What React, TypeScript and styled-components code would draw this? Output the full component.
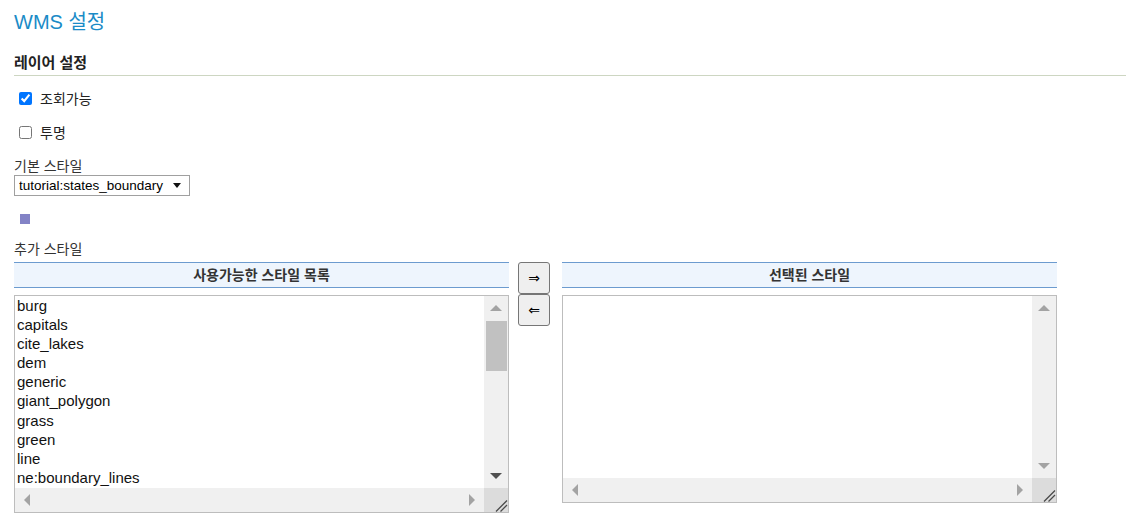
import styled, { createGlobalStyle } from 'styled-components';

const GlobalStyle = createGlobalStyle`
  html, body {
    margin: 0;
    padding: 0;
    background: #ffffff;
  }
  body {
    font-family: "Liberation Sans", "Noto Sans CJK KR", sans-serif;
    font-size: 14px;
    color: #222222;
  }
`;

const Page = styled.div`
  padding: 10px 14px 0 14px;
`;

const Title = styled.h1`
  margin: 0;
  font-size: 20px;
  line-height: 24px;
  font-weight: normal;
  color: #1a8bc7;
`;

const SectionTitle = styled.h3`
  margin: 19px -14px 0 0;
  padding-bottom: 2px;
  font-size: 15px;
  line-height: 20px;
  font-weight: bold;
  color: #222222;
  border-bottom: 1px solid #cdd6c2;
`;

const CheckRow = styled.label<{ $top: number }>`
  display: flex;
  align-items: center;
  height: 20px;
  margin-top: ${p => p.$top}px;
  padding-left: 5px;
  gap: 8px;
  font-size: 14px;
  color: #222222;

  input {
    margin: 0;
    width: 13px;
    height: 13px;
  }
`;

const FieldLabel = styled.div<{ $top: number }>`
  margin-top: ${p => p.$top}px;
  font-size: 14px;
  line-height: 18px;
  color: #333333;
`;

const SelectWrap = styled.div`
  position: relative;
  width: 176px;

  &::after {
    content: "";
    position: absolute;
    right: 9px;
    top: 8px;
    border-left: 4px solid transparent;
    border-right: 4px solid transparent;
    border-top: 5px solid #111111;
    pointer-events: none;
  }
`;

const StyleSelect = styled.select`
  display: block;
  appearance: none;
  width: 176px;
  height: 21px;
  font-family: "Liberation Sans", sans-serif;
  font-size: 13.5px;
  color: #000000;
  border: 1px solid #a0a0a0;
  border-radius: 0;
  background: #ffffff;
  padding: 0 0 0 4px;
`;

const Swatch = styled.div<{ $color: string }>`
  width: 10px;
  height: 10px;
  margin: 18px 0 0 6px;
  background: ${p => p.$color};
`;

const Lists = styled.div`
  display: flex;
  align-items: flex-start;
  margin-top: 4px;
`;

const Column = styled.div`
  display: flex;
  flex-direction: column;
  width: 495px;
  flex: none;
`;

const ColumnHeader = styled.div`
  height: 24px;
  line-height: 24px;
  text-align: center;
  font-weight: bold;
  font-size: 14px;
  color: #333333;
  background: #eef5fd;
  border-top: 1px solid #6c9bcf;
  border-bottom: 1px solid #6c9bcf;
`;

const ListFrame = styled.div<{ $height: number }>`
  display: grid;
  grid-template-columns: 1fr 24px;
  grid-template-rows: 1fr 24px;
  margin-top: 7px;
  height: ${p => p.$height}px;
  border: 1px solid #bdbdbd;
  background: #ffffff;
  box-sizing: border-box;
`;

const ListContent = styled.div`
  overflow: hidden;
  min-width: 0;
  min-height: 0;
`;

const ListItem = styled.div`
  padding-left: 2px;
  font-size: 15px;
  line-height: 19.1px;
  color: #111111;
  white-space: nowrap;
`;

const VBar = styled.div`
  display: flex;
  flex-direction: column;
  background: #f0f0f0;
  min-height: 0;
`;

const HBar = styled.div`
  display: flex;
  background: #f0f0f0;
  min-width: 0;
`;

const BarTrack = styled.div`
  flex: 1;
  min-height: 0;
  min-width: 0;
`;

const Thumb = styled.div<{ $size: number }>`
  height: ${p => p.$size}px;
  margin: 1px 1px 0 2px;
  background: #c1c1c1;
`;

const ArrowCell = styled.div`
  flex: none;
  width: 24px;
  height: 24px;
  display: flex;
  align-items: center;
  justify-content: center;
`;

type Dir = 'up' | 'down' | 'left' | 'right';

const Arrow = styled.span<{ $dir: Dir; $active?: boolean }>`
  width: 0;
  height: 0;
  ${p => {
    const c = p.$active ? '#505050' : '#a3a3a3';
    switch (p.$dir) {
      case 'up':
        return `border-left: 6px solid transparent; border-right: 6px solid transparent; border-bottom: 6px solid ${c};`;
      case 'down':
        return `border-left: 6px solid transparent; border-right: 6px solid transparent; border-top: 6px solid ${c};`;
      case 'left':
        return `border-top: 6px solid transparent; border-bottom: 6px solid transparent; border-right: 6px solid ${c};`;
      default:
        return `border-top: 6px solid transparent; border-bottom: 6px solid transparent; border-left: 6px solid ${c};`;
    }
  }}
`;

const Corner = styled.div`
  background: #dcdcdc;
  display: flex;
`;

const Shuttle = styled.div`
  display: flex;
  flex-direction: column;
  margin: 0 12px 0 9px;
`;

const ShuttleButton = styled.button`
  width: 32px;
  height: 32px;
  padding: 0;
  font-size: 14px;
  font-family: "DejaVu Sans", sans-serif;
  color: #000000;
  background: #efefef;
  border: 1px solid #767676;
  border-radius: 3px;
`;

function ResizeGrip() {
  return (
    <svg width="24" height="24" viewBox="0 0 24 24">
      <path d="M12 23.5 L23 12.5 M16.5 23.5 L23 17" stroke="#4a4a4a" strokeWidth="1.3" fill="none" />
    </svg>
  );
}

function StyleList({ items, height, thumb }: { items: string[]; height: number; thumb?: number }) {
  return (
    <ListFrame $height={height}>
      <ListContent>
        {items.map(name => (
          <ListItem key={name}>{name}</ListItem>
        ))}
      </ListContent>
      <VBar>
        <ArrowCell><Arrow $dir="up" /></ArrowCell>
        <BarTrack>{thumb ? <Thumb $size={thumb} /> : null}</BarTrack>
        <ArrowCell><Arrow $dir="down" $active={!!thumb} /></ArrowCell>
      </VBar>
      <HBar>
        <ArrowCell><Arrow $dir="left" /></ArrowCell>
        <BarTrack />
        <ArrowCell><Arrow $dir="right" /></ArrowCell>
      </HBar>
      <Corner>
        <ResizeGrip />
      </Corner>
    </ListFrame>
  );
}

const available = [
  'burg', 'capitals', 'cite_lakes', 'dem', 'generic', 'giant_polygon', 'grass',
  'green', 'line', 'ne:boundary_lines',
];

export default function App() {
  return (
    <>
      <GlobalStyle />
      <Page>
        <Title>WMS 설정</Title>
        <SectionTitle>레이어 설정</SectionTitle>
        <CheckRow $top={12}>
          <input type="checkbox" defaultChecked />
          <span>조회가능</span>
        </CheckRow>
        <CheckRow $top={14}>
          <input type="checkbox" />
          <span>투명</span>
        </CheckRow>
        <FieldLabel $top={15}>기본 스타일</FieldLabel>
        <SelectWrap>
          <StyleSelect defaultValue="tutorial:states_boundary">
            <option>tutorial:states_boundary</option>
          </StyleSelect>
        </SelectWrap>
        <Swatch $color="#8383c6" />
        <FieldLabel $top={16}>추가 스타일</FieldLabel>
        <Lists>
          <Column>
            <ColumnHeader>사용가능한 스타일 목록</ColumnHeader>
            <StyleList items={available} height={218} thumb={50} />
          </Column>
          <Shuttle>
            <ShuttleButton>⇒</ShuttleButton>
            <ShuttleButton>⇐</ShuttleButton>
          </Shuttle>
          <Column>
            <ColumnHeader>선택된 스타일</ColumnHeader>
            <StyleList items={[]} height={208} />
          </Column>
        </Lists>
      </Page>
    </>
  );
}
